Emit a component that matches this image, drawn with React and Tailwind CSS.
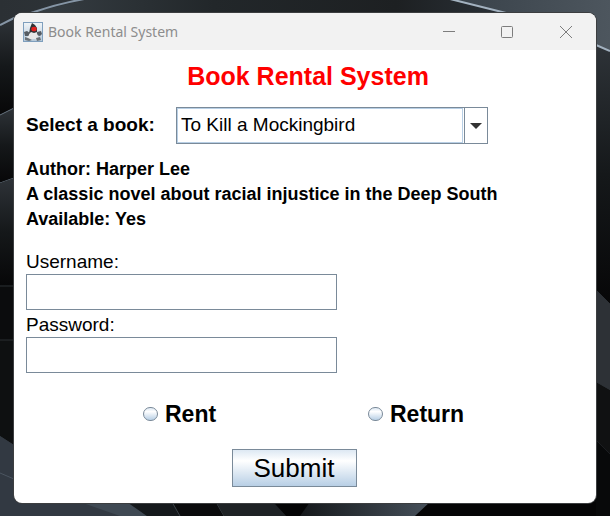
import React from "react";

function Wallpaper() {
  return (
    <svg className="absolute inset-0 h-full w-full" viewBox="0 0 610 516" preserveAspectRatio="none" aria-hidden="true">
      <defs>
        <linearGradient id="base" x1="0" y1="0" x2="1" y2="0">
          <stop offset="0" stopColor="#2b3034" />
          <stop offset="0.75" stopColor="#39424a" />
          <stop offset="1" stopColor="#4d565e" />
        </linearGradient>
        <linearGradient id="crest" x1="0" y1="0" x2="1" y2="0">
          <stop offset="0" stopColor="#3a4248" />
          <stop offset="0.35" stopColor="#22272a" />
          <stop offset="0.65" stopColor="#1d2022" />
          <stop offset="0.85" stopColor="#2c333a" />
          <stop offset="1" stopColor="#343c44" />
        </linearGradient>
        <linearGradient id="petal" x1="0" y1="0" x2="0" y2="1">
          <stop offset="0" stopColor="#2e3338" />
          <stop offset="0.5" stopColor="#15181a" />
          <stop offset="1" stopColor="#070708" />
        </linearGradient>
        <linearGradient id="slate" x1="0" y1="0" x2="1" y2="0">
          <stop offset="0" stopColor="#15181b" />
          <stop offset="1" stopColor="#46505a" />
        </linearGradient>
      </defs>
      <rect width="610" height="516" fill="url(#base)" />
      <path d="M0 25L14 18L30 13L85 0H451L506 13L596 45L610 51V60H0Z" fill="url(#crest)" />
      <path d="M0 25L14 18V108L0 115Z" fill="url(#petal)" />
      <path d="M596 45L610 51V304L596 290Z" fill="url(#petal)" />
      <path d="M0 25L14 18L34 12Q60 3 90 -2" fill="none" stroke="#8595a5" strokeWidth="2" />
      <path d="M446 -2L506 13L596 45L610 51" fill="none" stroke="#a3b2c0" strokeWidth="2" />
      <path d="M0 115L14 108V178L0 183Z" fill="url(#petal)" />
      <path d="M0 115L14 108M0 183L14 178" stroke="#64717e" strokeWidth="1" />
      <path d="M0 183L14 178V285H0Z" fill="url(#petal)" />
      <path d="M0 285H14V340H0Z" fill="#0b0c0d" />
      <path d="M0 340H14V445L0 436Z" fill="#0e1011" />
      <path d="M0 286H14M0 340H14" stroke="#2b2f32" strokeWidth="1" />
      <path d="M596 290L610 304V390L596 382Z" fill="#2d3136" />
      <path d="M596 382L610 390V454L596 440Z" fill="#101112" />
      <path d="M580 440H596L610 454V516H580Z" fill="#08090a" />
      <path d="M0 436L14 445L18 502H127L147 516H0Z" fill="#323942" />
      <path d="M0 473L14 479" stroke="#4b5560" strokeWidth="1" />
      <path d="M80 502H127L147 516H120Z" fill="#3f4953" />
      <path d="M127 502H172L180 516H147Z" fill="#15191c" />
      <path d="M172 502H216L224 516H180Z" fill="#0a0b0c" />
      <path d="M172 502L180 516M216 502L224 516" stroke="#3b4248" strokeWidth="1" />
      <path d="M216 502H273L286 516H224Z" fill="#1e2225" />
      <path d="M273 502H320V516H286Z" fill="#040405" />
      <path d="M310 502H430L415 516H300Z" fill="url(#slate)" />
      <path d="M430 502H596V516H415Z" fill="#050506" />
    </svg>
  );
}

function DukeIcon() {
  return (
    <svg className="h-5 w-5 shrink-0" viewBox="0 0 20 20" aria-hidden="true">
      <defs>
        <linearGradient id="tile" x1="0" y1="0" x2="0" y2="1">
          <stop offset="0" stopColor="#f1f5f8" />
          <stop offset="1" stopColor="#b4c8d9" />
        </linearGradient>
      </defs>
      <rect x="0.5" y="0.5" width="19" height="19" fill="url(#tile)" stroke="#7f9fbd" />
      <path d="M1 10L4 9L7 11L6 14L2 14ZM14 10L18 9L19 12L17 14L13 13Z" fill="#565c62" />
      <path d="M7 8L13 9L15 14L16 18L11 17L5 18L3 17L6 13Z" fill="#e8e8e8" />
      <path d="M9 1L12 3L14 6L14 10L11 11L8 10L6 12L7 6Z" fill="#303336" />
      <path d="M2 15L5 16L9 18L6 19L2 18ZM13 16L17 15L18 18L14 19Z" fill="#6c7277" />
      <ellipse cx="11" cy="7" rx="2.7" ry="2.3" fill="#e3201f" />
    </svg>
  );
}

function TitleBar() {
  return (
    <header className="flex h-[37px] items-center bg-[#f2f2f2] pl-[9px]">
      <DukeIcon />
      <span className="ml-[5px] flex-1 font-['Noto_Sans',sans-serif] text-[14px] text-[#8d8d8d]">Book Rental System</span>
      <div className="flex h-full text-[#7d7d7d]">
        <button type="button" aria-label="Minimize" className="flex w-[58px] items-center justify-center">
          <svg width="12" height="12" viewBox="0 0 12 12" fill="none" stroke="currentColor"><path d="M0 5.5H12" /></svg>
        </button>
        <button type="button" aria-label="Maximize" className="flex w-[58px] items-center justify-center">
          <svg width="12" height="12" viewBox="0 0 12 12" fill="none" stroke="currentColor"><rect x="0.5" y="0.5" width="11" height="11" rx="1" /></svg>
        </button>
        <button type="button" aria-label="Close" className="flex w-[60px] items-center justify-center">
          <svg width="12" height="12" viewBox="0 0 12 12" fill="none" stroke="currentColor"><path d="M0 0L12 12M12 0L0 12" /></svg>
        </button>
      </div>
    </header>
  );
}

function Field({ id, label, type }) {
  return (
    <div className="flex flex-col">
      <label htmlFor={id} className="pt-[3px] pb-px text-[19px] leading-[23px]">{label}</label>
      <input id={id} type={type} className="h-9 w-[311px] max-w-full border border-[#7a8a99] bg-white px-1 text-[19px] outline-none" />
    </div>
  );
}

function Choice({ id, label }) {
  return (
    <div className="flex items-center gap-[7px]">
      <input
        id={id}
        type="radio"
        name="action"
        className="h-[14px] w-[15px] appearance-none rounded-full border border-[#7a8a99] bg-linear-to-b from-[#dde8f3] via-white via-30% to-[#b8cfe5] checked:bg-[#333]"
      />
      <label htmlFor={id} className="text-[23px] leading-7 font-bold">{label}</label>
    </div>
  );
}

export default function App() {
  return (
    <div className="relative isolate min-h-screen bg-[#101214] px-[14px] py-[13px] font-['Liberation_Sans',Arial,sans-serif] text-black">
      <div className="absolute inset-0 -z-10 overflow-hidden"><Wallpaper /></div>
      <main className="overflow-hidden rounded-lg bg-white shadow-[0_0_0_1px_#3c3e40]">
        <TitleBar />
        <form className="px-3 pb-4" onSubmit={(e) => e.preventDefault()}>
          <h1 className="pt-[11px] pl-[6px] text-center text-[25px] leading-[30px] font-bold text-[#ff0000]">Book Rental System</h1>
          <div className="mt-4 flex items-center">
            <label htmlFor="book" className="w-[150px] text-[19px] font-bold">Select a book:</label>
            <div className="relative h-[37px] w-[312px] border border-[#7a8a99]">
              <select id="book" className="block h-full w-[286px] appearance-none border border-[#b8cfe5] bg-white pl-[3px] text-[19px] outline-none">
                <option>To Kill a Mockingbird</option>
              </select>
              <span className="pointer-events-none absolute inset-y-0 right-0 flex w-[23px] items-center justify-center border-l border-[#7a8a99]">
                <svg width="12" height="6" viewBox="0 0 12 6" fill="#333" aria-hidden="true"><path d="M0 0H12L6 6Z" /></svg>
              </span>
            </div>
          </div>
          <div className="mt-[13px] text-[18px] leading-[25px] font-bold">
            <p>Author: Harper Lee</p>
            <p>A classic novel about racial injustice in the Deep South</p>
            <p>Available: Yes</p>
          </div>
          <div className="mt-[15px]">
            <Field id="username" label="Username:" type="text" />
            <Field id="password" label="Password:" type="password" />
          </div>
          <div className="mt-[27px] grid grid-cols-[225px_1fr] pl-[117px]">
            <Choice id="rent" label="Rent" />
            <Choice id="return" label="Return" />
          </div>
          <div className="mt-[21px] flex justify-center pr-[22px]">
            <button type="submit" className="h-[38px] w-[125px] border border-[#7a8a99] bg-linear-to-b from-[#dde8f3] via-white via-30% to-[#b8cfe5] text-[26px] leading-[36px]">Submit</button>
          </div>
        </form>
      </main>
    </div>
  );
}
